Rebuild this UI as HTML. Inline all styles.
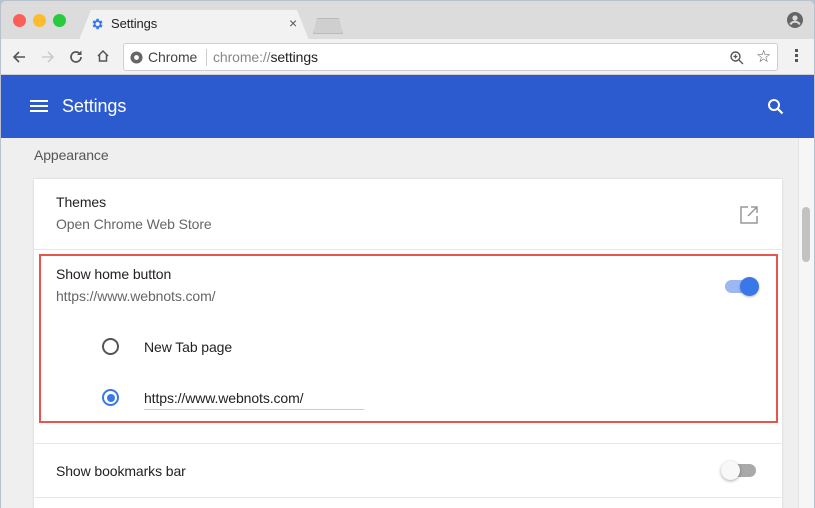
<!DOCTYPE html>
<html><head><style>
*{box-sizing:border-box;margin:0;padding:0}
body{width:815px;height:508px;overflow:hidden;font-family:"Liberation Sans",sans-serif;background:#b9c2cc;position:relative}
.win{position:absolute;left:1px;top:1px;width:813px;height:507px;background:#efefef;border-radius:5px 5px 0 0;overflow:hidden}
.tabs{position:absolute;left:0;top:0;width:100%;height:38px;background:#dcdcdc}
.dot{position:absolute;top:13px;width:13px;height:13px;border-radius:50%}
.tab{position:absolute;left:78px;top:9px;width:230px;height:30px;background:#f2f2f2;clip-path:polygon(0 100%,12px 0,calc(100% - 12px) 0,100% 100%)}
.tb{position:absolute;left:0;top:38px;width:100%;height:36px;background:#f2f2f2;border-bottom:1px solid #d0d0d0}
.omni{position:absolute;left:122px;top:4px;width:655px;height:28px;background:#fff;border:1px solid #cfcfcf;border-radius:3px}
.hdr{position:absolute;left:0;top:74px;width:100%;height:63px;background:#2c5bd0}
.card{position:absolute;left:33px;top:178px;width:748px;height:340px;background:#fff;box-shadow:0 0 2px rgba(0,0,0,.15)}
.t{position:absolute;font-size:14px;color:#222;white-space:nowrap;letter-spacing:-0.1px}
.s{color:#666}
</style></head><body>
<div class="win">
<div class="tabs">
<div class="dot" style="left:12px;background:#fc5f57"></div>
<div class="dot" style="left:32px;background:#fdbc2e"></div>
<div class="dot" style="left:52px;background:#29c940"></div>
<div class="tab"></div>
<svg style="position:absolute;left:89px;top:16px" width="14" height="14" viewBox="0 0 24 24"><path fill="#3b78e7" d="M19.4 13a7.5 7.5 0 0 0 0-2l2.1-1.6-2-3.5-2.5 1a7 7 0 0 0-1.7-1L15 3h-4l-.4 2.7a7 7 0 0 0-1.7 1l-2.5-1-2 3.5L6.6 11a7.5 7.5 0 0 0 0 2l-2.1 1.6 2 3.5 2.5-1a7 7 0 0 0 1.7 1L11 21h4l.4-2.7a7 7 0 0 0 1.7-1l2.5 1 2-3.5zM13 15.5a3.5 3.5 0 1 1 0-7 3.5 3.5 0 0 1 0 7z"/></svg>
<div class="t" style="left:110px;top:15px;font-size:13px">Settings</div>
<div class="t" style="left:288px;top:14px;font-size:14px;color:#555">×</div>
<div style="position:absolute;left:312px;top:17px;width:30px;height:16px;background:#cfcfcf;border:1px solid #bbb;clip-path:polygon(0 100%,4px 0,calc(100% - 4px) 0,100% 100%)"></div>
<svg style="position:absolute;left:786px;top:11px" width="16" height="16" viewBox="0 0 16 16"><circle cx="8" cy="8" r="8" fill="#666"/><circle cx="8" cy="6" r="2.6" fill="#dcdcdc"/><path d="M3.3 12.5c1-2 2.7-2.7 4.7-2.7s3.7.7 4.7 2.7" stroke="#dcdcdc" stroke-width="2" fill="none"/></svg>
</div>
<div class="tb">
<svg style="position:absolute;left:11px;top:11px" width="14" height="14" viewBox="0 0 14 14"><path d="M13 7H2M7 2L2 7l5 5" stroke="#555" stroke-width="1.6" fill="none"/></svg>
<svg style="position:absolute;left:40px;top:11px" width="14" height="14" viewBox="0 0 14 14"><path d="M1 7h11M7 2l5 5-5 5" stroke="#ccc" stroke-width="1.6" fill="none"/></svg>
<svg style="position:absolute;left:67px;top:10px" width="16" height="16" viewBox="0 0 16 16"><path d="M13 8a5 5 0 1 1-1.5-3.6" stroke="#555" stroke-width="1.7" fill="none"/><path d="M13.5 1.5v4.5H9z" fill="#555"/></svg>
<svg style="position:absolute;left:95px;top:10px" width="14" height="14" viewBox="0 0 14 14"><path d="M2 7L7 2l5 5M3.5 6v6h7V6" stroke="#555" stroke-width="1.5" fill="none"/></svg>
<div class="omni">
<svg style="position:absolute;left:6px;top:7px" width="13" height="13" viewBox="0 0 14 14"><circle cx="7" cy="7" r="6.5" fill="#666"/><circle cx="7" cy="7" r="2.6" fill="#fff"/></svg>
<div class="t" style="left:24px;top:5px;font-size:14px;color:#444">Chrome</div>
<div style="position:absolute;left:82px;top:5px;width:1px;height:17px;background:#ccc"></div>
<div class="t" style="left:89px;top:5px;font-size:14px;color:#888">chrome://<span style="color:#222">settings</span></div>
<svg style="position:absolute;left:605px;top:6px" width="16" height="16" viewBox="0 0 16 16"><circle cx="6.5" cy="6.5" r="4.5" stroke="#555" stroke-width="1.4" fill="none"/><path d="M10 10l4 4M6.5 4.5v4M4.5 6.5h4" stroke="#555" stroke-width="1.3"/></svg>
<div class="t" style="left:632px;top:3px;font-size:17px;color:#555">☆</div>
</div>
<div style="position:absolute;left:794px;top:10px;width:3px;height:3px;background:#555;box-shadow:0 5px #555,0 10px #555"></div>
</div>
<div class="hdr">
<div style="position:absolute;left:29px;top:25px;width:18px;height:2px;background:#fff;box-shadow:0 5px #fff,0 10px #fff"></div>
<div class="t" style="left:61px;top:21px;font-size:18px;color:#fff">Settings</div>
<svg style="position:absolute;left:766px;top:23px" width="18" height="18" viewBox="0 0 18 18"><circle cx="7" cy="7" r="5" stroke="#fff" stroke-width="2" fill="none"/><path d="M10.5 10.5l5 5" stroke="#fff" stroke-width="2.2"/></svg>
</div>
<div class="t" style="left:33px;top:146px;font-size:14px;color:#555">Appearance</div>
<div class="card">
<div class="t" style="left:22px;top:15px">Themes</div>
<div class="t s" style="left:22px;top:37px">Open Chrome Web Store</div>
<svg style="position:absolute;left:706px;top:27px" width="18" height="18" viewBox="0 0 18 18"><path d="M8 1H1v16h16v-7M11 1h6v6M17 1L8 10" stroke="#999" stroke-width="1.5" fill="none"/></svg>
<div style="position:absolute;left:0;top:70px;width:100%;height:1px;background:#e6e6e6"></div>
<div class="t" style="left:22px;top:87px">Show home button</div>
<div class="t s" style="left:22px;top:109px">https://www.webnots.com/</div>
<div style="position:absolute;left:691px;top:101px;width:30px;height:13px;border-radius:7px;background:#9bb8f3"></div>
<div style="position:absolute;left:706px;top:98px;width:19px;height:19px;border-radius:50%;background:#3b78e7;box-shadow:0 1px 2px rgba(0,0,0,.3)"></div>
<div style="position:absolute;left:68px;top:159px;width:17px;height:17px;border-radius:50%;border:2px solid #555"></div>
<div class="t" style="left:110px;top:160px">New Tab page</div>
<div style="position:absolute;left:68px;top:210px;width:17px;height:17px;border-radius:50%;border:2px solid #3b78e7"></div>
<div style="position:absolute;left:72.5px;top:214.5px;width:8px;height:8px;border-radius:50%;background:#3b78e7"></div>
<div class="t" style="left:110px;top:211px">https://www.webnots.com/</div>
<div style="position:absolute;left:110px;top:230px;width:220px;height:1px;background:#ccc"></div>
<div style="position:absolute;left:0;top:264px;width:100%;height:1px;background:#e6e6e6"></div>
<div class="t" style="left:22px;top:284px">Show bookmarks bar</div>
<div style="position:absolute;left:688px;top:285px;width:34px;height:13px;border-radius:7px;background:#a9a9a9"></div>
<div style="position:absolute;left:687px;top:282px;width:19px;height:19px;border-radius:50%;background:#f8f8f8;box-shadow:0 1px 3px rgba(0,0,0,.35)"></div>
<div style="position:absolute;left:0;top:318px;width:100%;height:1px;background:#e6e6e6"></div>
</div>
<div style="position:absolute;left:38px;top:253px;width:739px;height:169px;border:2px solid #e6564e"></div>
<div style="position:absolute;left:797px;top:137px;width:16px;height:371px;background:#f6f6f6;border-left:1px solid #e2e2e2"></div>
<div style="position:absolute;left:801px;top:206px;width:8px;height:55px;border-radius:4px;background:#c2c2c2"></div>
</div>
</body></html>
